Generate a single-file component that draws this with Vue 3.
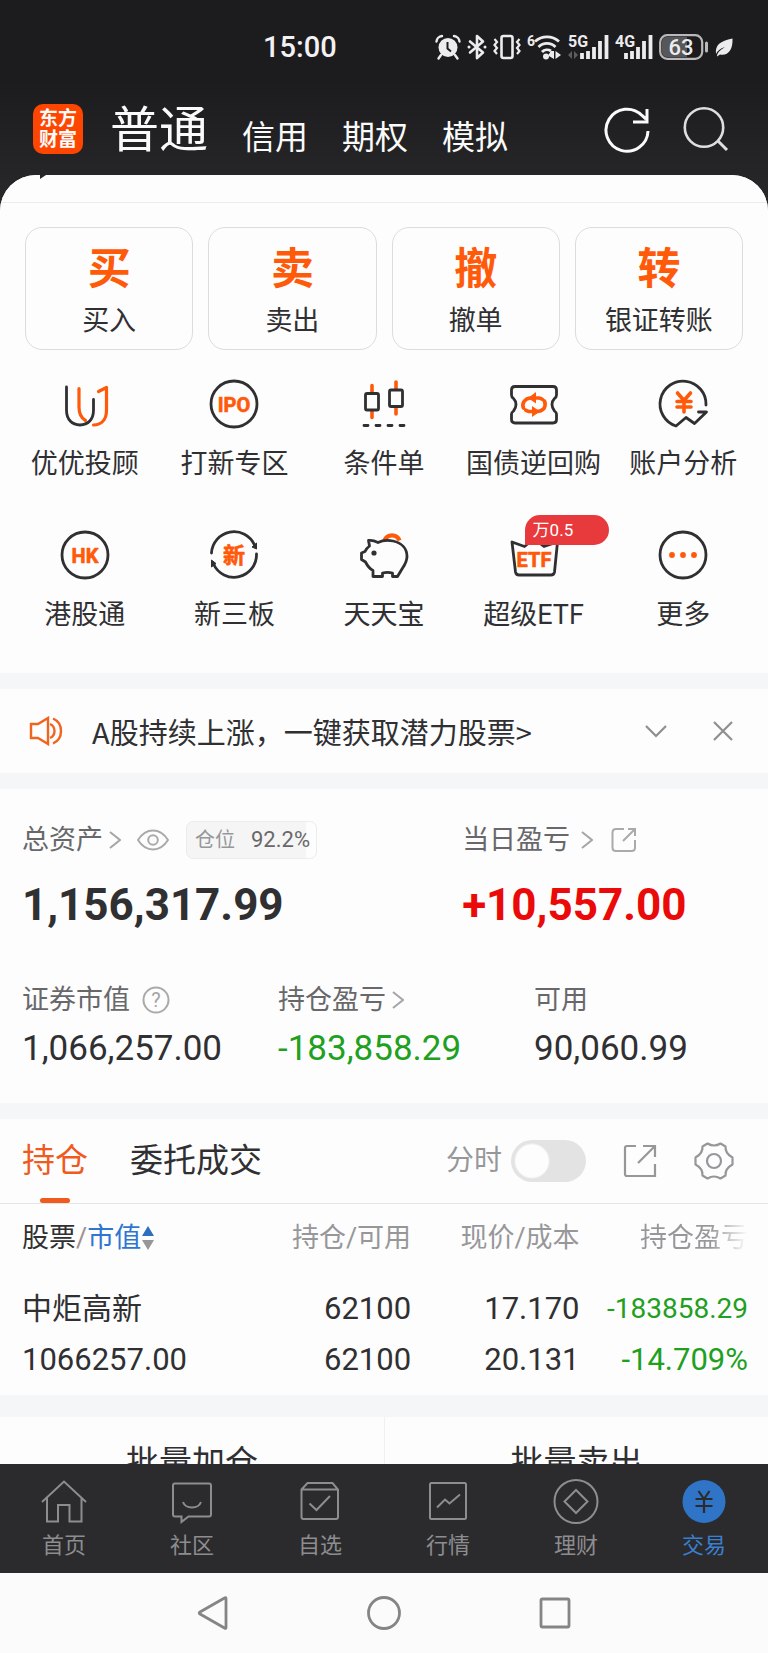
<script setup>
import { ref } from 'vue'

const live = ref(false)

const accounts = ['信用', '期权', '模拟']

const trades = [
  { mark: '买', label: '买入' },
  { mark: '卖', label: '卖出' },
  { mark: '撤', label: '撤单' },
  { mark: '转', label: '银证转账' }
]

const holdings = [
  {
    name: '中炬高新',
    value: '1066257.00',
    held: '62100',
    usable: '62100',
    price: '17.170',
    cost: '20.131',
    profit: '-183858.29',
    rate: '-14.709%'
  }
]
</script>

<template>
  <div class="app">
    <div class="status">
      <span class="time">15:00</span>
      <div class="signals">
        <svg width="26" height="26" viewBox="0 0 26 26" aria-hidden="true">
          <circle cx="13" cy="13.500" r="9.500" fill="#ececee" />
          <path d="M1.500 7.500A6 6 0 0 1 7 2M24.500 7.500A6 6 0 0 0 19 2M6 21L3.500 24.500M20 21L22.500 24.500" fill="none" stroke="#ececee" stroke-width="2.400" stroke-linecap="round" />
          <path d="M12.500 8V14.500L16 17.500" fill="none" stroke="#1c1c1e" stroke-width="2" />
        </svg>
        <svg width="20" height="26" viewBox="0 0 20 26" aria-hidden="true">
          <path d="M3 7.500L16 18.500L10 24V2L16 7.500L3 18.500" fill="none" stroke="#ececee" stroke-width="2.600" stroke-linejoin="round" stroke-linecap="round" />
          <circle cx="2" cy="13" r="1.500" fill="#ececee" /><circle cx="18" cy="13" r="1.500" fill="#ececee" />
        </svg>
        <svg width="28" height="26" viewBox="0 0 28 26" aria-hidden="true">
          <rect x="8.500" y="2" width="11" height="22" rx="2" fill="none" stroke="#ececee" stroke-width="2.600" />
          <path d="M1.500 5L4 8L1.500 11L4 14L1.500 17L4 20M26.500 5L24 8L26.500 11L24 14L26.500 17L24 20" fill="none" stroke="#ececee" stroke-width="2.200" />
        </svg>
        <svg width="35" height="26" viewBox="0 0 35 26" aria-hidden="true">
          <text x="0" y="12" class="tiny">6</text>
          <path d="M8 7.500A18 18 0 0 1 32 7.500M11.500 13A12 12 0 0 1 28.500 13M15 18A7 7 0 0 1 24 17" fill="none" stroke="#ececee" stroke-width="2.800" />
          <circle cx="19" cy="22.500" r="3" fill="#ececee" />
          <path d="M24 17L27 17V25L21 21.500ZM28.500 17L34 21L28.500 25Z" fill="#ececee" />
        </svg>
        <svg width="41" height="26" viewBox="0 0 41 26" aria-hidden="true">
          <text x="0" y="13" class="net">5G</text>
          <path d="M0 21L4 17V25ZM6 17V25L10 21Z" fill="#5c5c5e" />
          <path d="M14 19V25M20 17V25M26 13V25M32 7V25M38.500 1V25" stroke="#ececee" stroke-width="3.800" />
        </svg>
        <svg width="38" height="26" viewBox="0 0 38 26" aria-hidden="true">
          <text x="0" y="13" class="net">4G</text>
          <path d="M11 19V25M17 17V25M23 13V25M29 7V25M35.500 1V25" stroke="#ececee" stroke-width="3.800" />
        </svg>
        <svg width="50" height="26" viewBox="0 0 50 26" aria-hidden="true">
          <rect x="1.200" y="1.200" width="42" height="23.600" rx="7" fill="#1c1c1e" stroke="#b9b9bb" stroke-width="2.200" />
          <path d="M8 3H28V23H8Q3 23 3 18V8Q3 3 8 3Z" fill="#57575a" />
          <path d="M47.500 9V17" stroke="#b9b9bb" stroke-width="3" stroke-linecap="round" />
          <text x="22" y="20.500" class="charge">63</text>
        </svg>
        <svg width="18" height="26" viewBox="0 0 18 26" aria-hidden="true">
          <path d="M17.500 4.500C18 16 13 22 5 20.500L2 22.500C2 19 5 16 10 13C5 14.500 2.500 17 1 20C0 11 5 7 17.500 4.500Z" fill="#ececee" />
        </svg>
      </div>
    </div>

    <header class="top">
      <span class="logo">东方<br />财富</span>
      <nav class="accounts">
        <a href="#normal" class="current">普通</a>
        <a v-for="a in accounts" :key="a" href="#account">{{ a }}</a>
      </nav>
      <div class="tools">
        <button type="button" aria-label="刷新">
          <svg width="48" height="48" viewBox="0 0 48 48">
            <path d="M45 26A21 21 0 1 1 39 10.500L43 14M44 4V17H30" fill="none" stroke="#fafafa" stroke-width="3" />
          </svg>
        </button>
        <button type="button" aria-label="搜索">
          <svg width="48" height="48" viewBox="0 0 48 48">
            <circle cx="22" cy="22.500" r="19.200" fill="none" stroke="#dedede" stroke-width="2.600" />
            <path d="M35.500 35.500L45 45" stroke="#dedede" stroke-width="3" />
          </svg>
        </button>
      </div>
    </header>

    <main class="sheet">
      <div class="lip">
        <svg width="6" height="4" viewBox="0 0 6 4" aria-hidden="true"><path d="M0 0H6L0 4Z" fill="#262627" /></svg>
      </div>

      <section class="actions">
        <div class="cards">
          <button v-for="t in trades" :key="t.mark" type="button" class="card">
            <span class="mark">{{ t.mark }}</span>
            <span>{{ t.label }}</span>
          </button>
        </div>

        <div class="grid">
          <a href="#advisor" class="entry">
            <svg class="icon" viewBox="0 0 48 48">
              <path class="o" d="M18 8.500V27C18 34 20 38 24.500 40.500" />
              <path class="d" d="M5.500 7V30C5.500 39.500 11 45 19 45S32.500 39.500 32.500 30V19.500" />
              <path class="o" d="M37.500 11.500L45.500 7.500V30C45.500 39.500 40.500 45 32.500 45" />
            </svg>
            <span>优优投顾</span>
          </a>
          <a href="#ipo" class="entry">
            <svg class="icon" viewBox="0 0 48 48">
              <circle class="d" cx="24" cy="24" r="23" />
              <text x="24" y="31.500" class="word">IPO</text>
            </svg>
            <span>打新专区</span>
          </a>
          <a href="#conditional" class="entry">
            <svg class="icon" viewBox="0 0 48 48">
              <path class="o wide" d="M12 5.500V12M12 31V37.500M36 2V8.500M36 27.500V34" />
              <rect class="d" x="5.500" y="13.500" width="13" height="16.500" rx="1.500" />
              <rect class="d" x="29.500" y="10" width="13" height="16.500" rx="1.500" />
              <path class="d" d="M4 45.500H8M16 45.500H20M28 45.500H32M40 45.500H44" />
            </svg>
            <span>条件单</span>
          </a>
          <a href="#repo" class="entry">
            <svg class="icon" viewBox="0 0 48 48">
              <path class="d" d="M5 6.500H43Q46.500 6.500 46.500 10V15Q46.500 17 44.500 18.500Q42 21 42 24.500T44.500 31Q46.500 32.500 46.500 34V39.500Q46.500 43 43 43H5Q1.500 43 1.500 39.500V34Q1.500 32.500 3.500 31Q6 28 6 24.500T3.500 18.500Q1.500 17 1.500 15V10Q1.500 6.500 5 6.500Z" />
              <path class="o wide" d="M13.500 28Q12 25 14 21.500Q16.500 18 21 18H29Q34.500 19 35.500 25M34.500 21Q36 25 34 28.500Q31 31.500 27 31.500H19Q14.500 30 13.500 28" stroke-dasharray="27 100" />
              <path d="M18 18L26 12V23.500ZM30 31.500L22 26V37Z" fill="#ff5a0a" />
            </svg>
            <span>国债逆回购</span>
          </a>
          <a href="#analysis" class="entry">
            <svg class="icon" viewBox="0 0 48 48">
              <path class="d" d="M47 25A23 23 0 1 0 17 46L27 37.500L35.500 43.500L47.500 32H39.500" />
              <path class="o wide" d="M18.500 13L25 20.500L31.500 13M18 21.500H32M18 27H32M25 20.500V32" />
            </svg>
            <span>账户分析</span>
          </a>

          <a href="#hk" class="entry">
            <svg class="icon" viewBox="0 0 48 48">
              <circle class="d" cx="24" cy="24" r="23" />
              <text x="24" y="31.500" class="word">HK</text>
            </svg>
            <span>港股通</span>
          </a>
          <a href="#neeq" class="entry">
            <svg class="icon" viewBox="0 0 48 48">
              <path class="d" d="M1.500 22A22.500 22.500 0 0 1 44.500 14M46.500 23A22.500 22.500 0 0 1 3.500 33" />
              <path d="M46.500 12V18L42 16ZM1.500 36V29L6 32.500Z" fill="#303033" stroke="#303033" />
              <text x="24" y="32" class="hanzi">新</text>
            </svg>
            <span>新三板</span>
          </a>
          <a href="#wallet" class="entry">
            <svg class="icon" viewBox="0 0 48 48">
              <path d="M24.500 9.500A8 8 0 0 1 39.500 9.500" fill="none" stroke="#ff5a0a" stroke-width="4.200" />
              <path class="d" d="M8.500 9.500C12 9 15 10 18 11.500C22 9.500 28 9 33 10C42 12 47 18 47 25.500C47 31 44 35 42 38L37.500 45.500H32.500V42C29 41 26 41 22.500 42V45.500H13V39.500C10 38 7.500 35 5.500 31L1.500 28.500V22L5 20.500C6 18 7.500 16.500 9.500 15Z" />
              <circle cx="14" cy="22" r="2.600" fill="#303033" />
            </svg>
            <span>天天宝</span>
          </a>
          <a href="#etf" class="entry">
            <span class="pic">
              <svg class="icon" viewBox="0 0 48 48">
                <path class="d" d="M2 11L14.500 15.500L24 8L34 15.500L47.500 11L44.500 41Q44 44 41 44H9Q6 44 5.500 41Z" />
                <text x="24" y="36" class="word">ETF</text>
              </svg>
              <em class="badge">万0.5</em>
            </span>
            <span>超级ETF</span>
          </a>
          <a href="#more" class="entry">
            <svg class="icon" viewBox="0 0 48 48">
              <circle class="d" cx="24" cy="24" r="23" />
              <g fill="#ff5a0a"><circle cx="13" cy="24" r="2.900" /><circle cx="24" cy="24" r="2.900" /><circle cx="35" cy="24" r="2.900" /></g>
            </svg>
            <span>更多</span>
          </a>
        </div>
      </section>

      <section class="notice">
        <svg width="34" height="30" viewBox="0 0 34 30" fill="none" stroke="#f0641e" stroke-width="2.400" aria-hidden="true">
          <path d="M2 8H9L19 2V28L9 22H2Z" />
          <path d="M21 8Q25.500 10 25.500 15T21 22M24 2.500Q32 6 32 15T24 27.500" />
        </svg>
        <a href="#news">A股持续上涨，一键获取潜力股票&gt;</a>
        <button type="button" aria-label="展开">
          <svg width="22" height="22" viewBox="0 0 22 22"><path d="M1 6L11 16L21 6" fill="none" stroke="#8f8f92" stroke-width="2.200" /></svg>
        </button>
        <button type="button" aria-label="关闭">
          <svg width="22" height="22" viewBox="0 0 22 22"><path d="M2 2L20 20M20 2L2 20" fill="none" stroke="#8f8f92" stroke-width="2.200" /></svg>
        </button>
      </section>

      <section class="assets">
        <div class="pair">
          <div>
            <div class="caption tall">
              <span>总资产</span>
              <svg class="chev" viewBox="0 0 12 18"><path d="M1 1L11 9L1 17" /></svg>
              <svg class="eye" viewBox="0 0 32 22" fill="none" stroke="#aaa" stroke-width="2">
                <path d="M1 11Q7 1.500 16 1.500T31 11Q25 20.500 16 20.500T1 11Z" /><circle cx="16" cy="11" r="4.800" />
              </svg>
              <span class="ratio"><i>仓位</i><b>92.2%</b></span>
            </div>
            <div class="big">1,156,317.99</div>
          </div>
          <div>
            <div class="caption tall">
              <span>当日盈亏</span>
              <svg class="chev far" viewBox="0 0 12 18"><path d="M1 1L11 9L1 17" /></svg>
              <svg class="share" viewBox="0 0 26 26" fill="none" stroke="#aaa" stroke-width="2">
                <path d="M13 2H5Q1.500 2 1.500 5.500V20.500Q1.500 24 5 24H20.500Q24 24 24 20.500V13M17 2H24V9M24 2L12 14" />
              </svg>
            </div>
            <div class="big up">+10,557.00</div>
          </div>
        </div>
        <div class="trio">
          <div>
            <div class="caption">
              <span>证券市值</span>
              <svg class="help" viewBox="0 0 28 28">
                <circle cx="14" cy="14" r="12.500" fill="none" stroke="#aaa" stroke-width="2" />
                <text x="14" y="21" class="ask">?</text>
              </svg>
            </div>
            <div class="mid">1,066,257.00</div>
          </div>
          <div>
            <div class="caption">
              <span>持仓盈亏</span>
              <svg class="chev" viewBox="0 0 12 18"><path d="M1 1L11 9L1 17" /></svg>
            </div>
            <div class="mid down">-183,858.29</div>
          </div>
          <div>
            <div class="caption"><span>可用</span></div>
            <div class="mid">90,060.99</div>
          </div>
        </div>
      </section>

      <section class="positions">
        <div class="tabs">
          <a href="#hold" class="tab on">持仓</a>
          <a href="#orders" class="tab">委托成交</a>
          <label class="switch">分时<input v-model="live" type="checkbox" role="switch" /></label>
          <button type="button" aria-label="分享">
            <svg width="34" height="34" viewBox="0 0 34 34" fill="none" stroke="#97979a" stroke-width="2.200">
              <path d="M13 2H4Q2 2 2 4V30Q2 32 4 32H32V20M20 2H32V13M32 2L15 19" />
            </svg>
          </button>
          <button type="button" aria-label="设置">
            <svg width="40" height="40" viewBox="0 0 40 40" fill="none" stroke="#97979a" stroke-width="2.200">
              <circle cx="20" cy="20" r="7" />
              <path d="M13.500 2.500Q20 6.500 26.500 2.500L31.500 5.500Q31 12.500 38.500 16.500V23.500Q31 27.500 31.500 34.500L26.500 37.500Q20 33.500 13.500 37.500L8.500 34.500Q9 27.500 1.500 23.500V16.500Q9 12.500 8.500 5.500Z" stroke-linejoin="round" />
            </svg>
          </button>
        </div>
        <table>
          <thead>
            <tr>
              <th class="first">
                股票<i>/</i><a href="#sort">市值<svg width="12" height="26" viewBox="0 0 12 26" aria-hidden="true"><path d="M6 1L12 11H0Z" fill="#2e6fc0" /><path d="M6 25L12 15H0Z" fill="#97979a" /></svg></a>
              </th>
              <th>持仓/可用</th>
              <th>现价/成本</th>
              <th><span class="fade">持仓盈亏</span></th>
            </tr>
          </thead>
          <tbody>
            <tr v-for="h in holdings" :key="h.name">
              <td class="first"><div class="name">{{ h.name }}</div><div>{{ h.value }}</div></td>
              <td><div>{{ h.held }}</div><div>{{ h.usable }}</div></td>
              <td><div>{{ h.price }}</div><div>{{ h.cost }}</div></td>
              <td class="down"><div class="fit">{{ h.profit }}</div><div>{{ h.rate }}</div></td>
            </tr>
          </tbody>
        </table>
      </section>

      <section class="batch">
        <button type="button">批量加仓</button>
        <button type="button">批量卖出</button>
      </section>
    </main>

    <nav class="bottom">
      <a href="#home">
        <svg class="glyph" viewBox="0 0 48 48"><path d="M2 25L24 4.500L46 25M7 21V44.500H18V28H29.500V44.500H41.500V21" /></svg>
        <span>首页</span>
      </a>
      <a href="#community">
        <svg class="glyph" viewBox="0 0 48 48"><path d="M6 6.500H41Q43 6.500 43 8.500V37.500Q43 39.500 41 39.500H20.500L13.500 45V39.500H7Q5 39.500 5 37.500V8.500Q5 6.500 7 6.500M15 25Q17 30.500 24 30.500T33 25" /></svg>
        <span>社区</span>
      </a>
      <a href="#watch">
        <svg class="glyph" viewBox="0 0 48 48"><path d="M5.500 12.500L11.500 6H36.500L42 12.500V40Q42 42 40 42H7.500Q5.500 42 5.500 40ZM5.500 12.500H42M13.500 26.500L20.500 33L34 19" /></svg>
        <span>自选</span>
      </a>
      <a href="#market">
        <svg class="glyph" viewBox="0 0 48 48"><rect x="6" y="6" width="36" height="36" rx="1.500" /><path d="M13 30.500L21 22.500L25.500 26.500L36 17.500" /></svg>
        <span>行情</span>
      </a>
      <a href="#wealth">
        <svg class="glyph" viewBox="0 0 48 48"><circle cx="24" cy="24.500" r="21.500" /><path d="M24 13L35.500 24.500L24 36L12.500 24.500Z" /></svg>
        <span>理财</span>
      </a>
      <a href="#trade" class="active">
        <svg class="glyph" viewBox="0 0 48 48"><circle cx="24" cy="24.500" r="21.500" class="disc" /><path class="yen" d="M18.500 14L24 22L29.500 14M15.500 22H32.500M15.500 29H32.500M24 22V36" /></svg>
        <span>交易</span>
      </a>
    </nav>

    <div class="system">
      <button type="button" aria-label="返回">
        <svg width="34" height="34" viewBox="0 0 34 34"><path d="M30 2.500V31.500Q30 33 28.500 32L4 18Q2.500 17 4 16L28.500 2Q30 1 30 2.500Z" /></svg>
      </button>
      <button type="button" aria-label="主屏">
        <svg width="34" height="34" viewBox="0 0 34 34"><circle cx="17" cy="17" r="15.500" /></svg>
      </button>
      <button type="button" aria-label="最近任务">
        <svg width="34" height="34" viewBox="0 0 34 34"><rect x="3" y="3" width="28" height="28" rx="1.500" /></svg>
      </button>
    </div>
  </div>
</template>

<style>
body {
  margin: 0;
  background: #fdfdfd;
}
</style>

<style scoped>
.app {
  display: flex;
  flex-direction: column;
  height: 100vh;
  overflow: hidden;
  background: linear-gradient(#1c1c1e 0, #1c1c1e 80px, #28282a 200px);
  color: #303033;
  font-family: Roboto, "Noto Sans CJK SC", sans-serif;
  font-size: 27px;
  line-height: 36px;
}
a {
  color: inherit;
  text-decoration: none;
}
button {
  padding: 0;
  border: 0;
  background: none;
  color: inherit;
  font: inherit;
}
svg {
  display: block;
  flex: none;
}

.status {
  display: flex;
  flex: none;
  align-items: center;
  justify-content: space-between;
  height: 93px;
  padding: 0 35px 0 34%;
  color: #f2f2f4;
}
.time {
  padding-left: 2px;
  font-size: 29px;
  font-weight: 500;
}
.signals {
  display: flex;
  gap: 6px;
}
.signals svg {
  overflow: visible;
}
.tiny,
.net,
.charge {
  fill: #ececee;
  font-size: 14px;
  font-weight: 700;
}
.net {
  font-size: 16px;
}
.charge {
  font-size: 22px;
  font-weight: 500;
  text-anchor: middle;
}

.top {
  display: flex;
  flex: none;
  align-items: center;
  height: 72px;
  padding: 0 38px 10px 33px;
  color: #fafafa;
}
.logo {
  width: 50px;
  padding: 4px 0;
  border-radius: 10px;
  background: #ff4600;
  font-size: 19px;
  font-weight: 700;
  line-height: 21px;
  text-align: center;
}
.accounts {
  display: flex;
  flex: 1;
  align-items: flex-end;
  gap: 34px;
  padding: 4px 0 0 27px;
  font-size: 33px;
  line-height: 47px;
}
.current {
  font-size: 49px;
  line-height: 60px;
}
.tools {
  display: flex;
  gap: 31px;
}

.sheet {
  flex: 1;
  min-height: 0;
  overflow: hidden;
  border-radius: 36px 36px 0 0;
  background: #f5f6f7;
}
.lip {
  height: 27px;
  padding-left: 40px;
  border-bottom: 1px solid #ececec;
  background: #fdfdfd;
}

.actions {
  padding: 24px 0 40px;
  background: #fdfdfd;
}
.cards {
  display: grid;
  grid-template-columns: repeat(4, 1fr);
  gap: 15px;
  padding: 0 25px;
}
.card {
  display: flex;
  flex-direction: column;
  align-items: center;
  gap: 10px;
  padding: 17px 0 10px;
  border: 1px solid #dcdcde;
  border-radius: 17px;
}
.mark {
  color: #ff5a0a;
  font-size: 43px;
  font-weight: 700;
  line-height: 48px;
}
.grid {
  display: grid;
  grid-template-columns: repeat(5, 1fr);
  row-gap: 49px;
  padding: 30px 10px 0;
}
.entry {
  display: flex;
  flex-direction: column;
  align-items: center;
  gap: 18px;
  white-space: nowrap;
}
.icon {
  width: 48px;
  height: 48px;
  overflow: visible;
}
.d,
.o {
  fill: none;
  stroke: #303033;
  stroke-width: 2.8;
  stroke-linecap: round;
  stroke-linejoin: round;
}
.o {
  stroke: #ff5a0a;
  stroke-width: 3.2;
}
.wide {
  stroke-width: 3.6;
}
.word,
.hanzi {
  fill: #ff5a0a;
  stroke: #ff5a0a;
  stroke-width: 0.6;
  stroke-linejoin: round;
  font-size: 20px;
  font-weight: 700;
  text-anchor: middle;
}
.hanzi {
  font-size: 22px;
}
.pic {
  position: relative;
}
.badge {
  position: absolute;
  top: -16px;
  left: 15px;
  box-sizing: border-box;
  width: 84px;
  padding-left: 8px;
  border-radius: 15px 15px 15px 0;
  background: #e8393d;
  color: #fff;
  font-size: 17px;
  font-style: normal;
  line-height: 30px;
}

.notice {
  display: flex;
  align-items: center;
  height: 84px;
  margin: 16px 0;
  padding: 0 34px 0 29px;
  background: #fdfdfd;
  font-family: "Noto Sans CJK SC", sans-serif;
  font-size: 29px;
}
.notice a {
  flex: 1;
  padding-left: 29px;
}
.notice button + button {
  margin-left: 45px;
}

.assets {
  padding: 32px 0 33px 22px;
  background: #fdfdfd;
}
.pair {
  display: grid;
  grid-template-columns: 59fr 41fr;
}
.caption {
  display: flex;
  align-items: center;
  height: 38px;
  color: #68686b;
}
.chev {
  width: 12px;
  height: 18px;
  margin-left: 6px;
  fill: none;
  stroke: #a5a5a8;
  stroke-width: 2;
}
.far {
  margin-left: 11px;
}
.eye {
  width: 32px;
  height: 22px;
  margin-left: 16px;
}
.share {
  width: 26px;
  height: 26px;
  margin-left: 18px;
}
.help {
  width: 28px;
  height: 28px;
  margin-left: 12px;
}
.ask {
  fill: #a5a5a8;
  font-size: 20px;
  text-anchor: middle;
}
.ratio {
  display: flex;
  gap: 16px;
  margin-left: 17px;
  padding: 0 6px 0 8px;
  border: 1px solid #ececec;
  border-radius: 7px;
  background: linear-gradient(to right, #f5f5f5 92%, #fdfdfd 92%);
  font-size: 20px;
}
.ratio i {
  color: #97979a;
  font-style: normal;
}
.ratio b {
  font-size: 22px;
  font-weight: 400;
}
.big {
  margin-top: 21px;
  font-size: 44px;
  font-weight: 700;
  line-height: 50px;
}
.up {
  color: #ea0a0a;
}
.down {
  color: #1fa01f;
}
.trio {
  display: grid;
  grid-template-columns: 256fr 256fr 234fr;
  margin-top: 51px;
}
.mid {
  margin-top: 9px;
  font-size: 35px;
  line-height: 42px;
}

.positions {
  margin: 16px 0 22px;
  background: #fdfdfd;
}
.tabs {
  display: flex;
  align-items: center;
  height: 84px;
  padding: 0 34px 0 22px;
  border-bottom: 1px solid #e6e6e8;
}
.tab {
  position: relative;
  margin-right: 42px;
  font-size: 33px;
  line-height: 86px;
}
.on {
  color: #f05a1e;
}
.on::after {
  content: "";
  position: absolute;
  bottom: 1px;
  left: calc(50% - 15px);
  width: 30px;
  height: 5px;
  border-radius: 3px;
  background: #f05a1e;
}
.switch {
  display: flex;
  align-items: center;
  gap: 9px;
  margin: 0 37px 0 auto;
  color: #97979a;
  font-size: 28px;
}
.switch input {
  width: 75px;
  height: 42px;
  margin: 0;
  border-radius: 21px;
  background: radial-gradient(circle at 21px 50%, #fdfdfd 16px, #e3e3e4 18px);
  appearance: none;
}
.switch input:checked {
  background: radial-gradient(circle at 54px 50%, #fdfdfd 16px, #f05a1e 18px);
}
.tabs button + button {
  margin-left: 37px;
}
table {
  width: 100%;
  padding: 0 20px 0 22px;
  border-spacing: 0;
  table-layout: fixed;
}
th,
td {
  padding: 0;
  text-align: right;
  white-space: nowrap;
}
th {
  width: 23.2%;
  height: 67px;
  color: #97979a;
  font-weight: 400;
}
th:nth-child(2) {
  width: 20%;
}
.first {
  text-align: left;
}
th.first {
  width: 33.6%;
  color: #303033;
}
th i {
  color: #a09090;
  font-style: normal;
}
th a {
  color: #2e76d0;
}
th svg {
  display: inline-block;
  vertical-align: -4px;
  margin-left: 1px;
}
.fade {
  background: linear-gradient(to right, #97979a 65%, #fdfdfd);
  background-clip: text;
  color: transparent;
}
td {
  padding: 12px 0 10px;
  font-size: 31px;
  line-height: 51px;
}
.name {
  font-size: 30px;
}
.fit {
  font-size: 28px;
}

.batch {
  display: grid;
  grid-template-columns: 1fr 1fr;
  background: #fdfdfd;
  font-size: 33px;
}
.batch button {
  height: 92px;
}
.batch button + button {
  border-left: 1px solid #f0f0f0;
}

.bottom {
  display: grid;
  flex: none;
  grid-template-columns: repeat(6, 1fr);
  background: #2b2b2d;
  color: #8d8d90;
  font-size: 22px;
  line-height: 30px;
}
.bottom a {
  display: flex;
  flex-direction: column;
  align-items: center;
  gap: 6px;
  padding: 13px 0 12px;
}
.glyph {
  width: 48px;
  height: 48px;
  fill: none;
  stroke: #8d8d90;
  stroke-width: 2;
}
.active {
  color: #3a7fd0;
}
.disc {
  fill: #2f74c6;
  stroke: none;
}
.yen {
  stroke: #2b2b2d;
  stroke-width: 2.2;
}

.system {
  display: flex;
  flex: none;
  align-items: center;
  justify-content: center;
  gap: 137px;
  height: 80px;
  background: #fbfbfb;
}
.system svg {
  fill: none;
  stroke: #858587;
  stroke-width: 2.8;
}
</style>
